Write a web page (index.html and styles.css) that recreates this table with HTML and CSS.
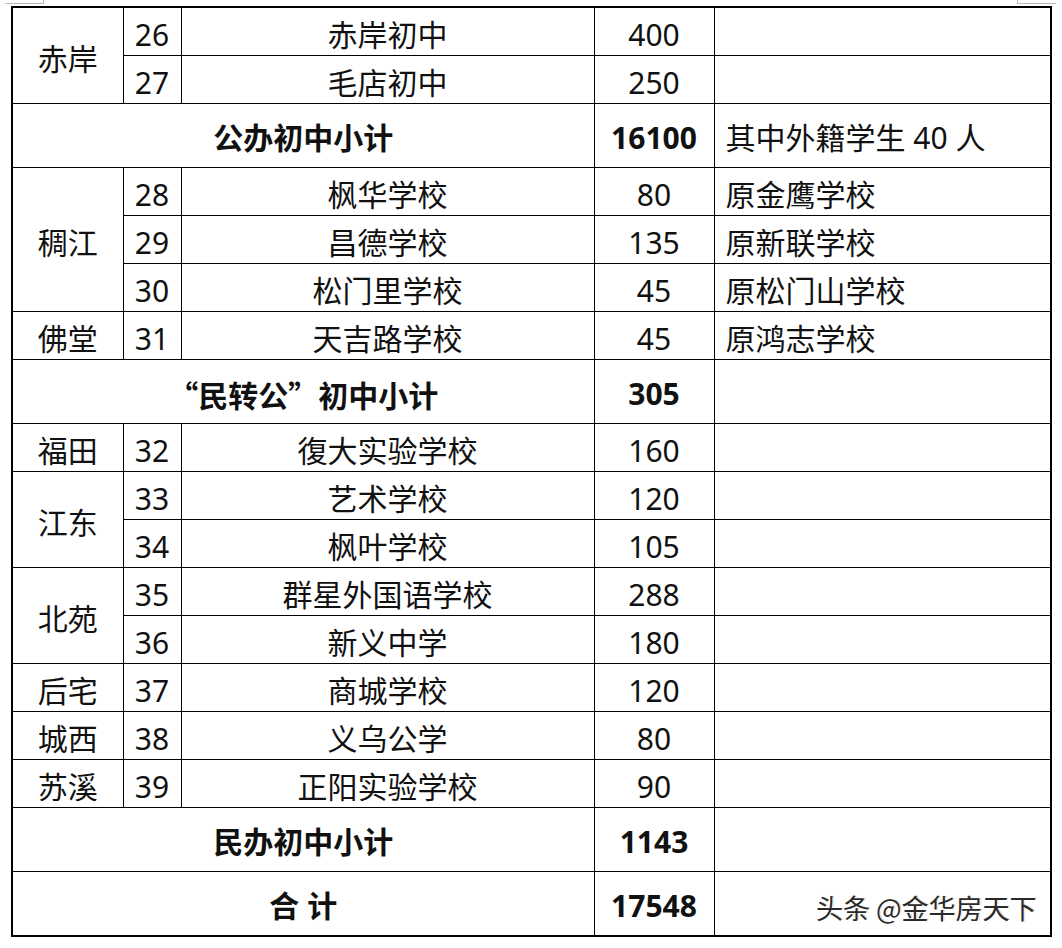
FILE: index.html
```html
<!DOCTYPE html>
<html lang="zh-CN">
<head>
<meta charset="utf-8">
<link rel="stylesheet" href="styles.css">
</head>
<body>
<div class="page">
  <span class="mark mark-left"></span>
  <span class="mark mark-right"></span>
  <table class="sheet">
    <colgroup>
      <col class="c-area"><col class="c-no"><col class="c-name"><col class="c-num"><col class="c-note">
    </colgroup>
    <tbody>
      <tr class="row"><td rowspan="2">赤岸</td><td>26</td><td>赤岸初中</td><td>400</td><td class="note"></td></tr>
      <tr class="row"><td>27</td><td>毛店初中</td><td>250</td><td class="note"></td></tr>
      <tr class="sub"><td colspan="3" class="b">公办初中小计</td><td class="b">16100</td><td class="note">其中外籍学生 40 人</td></tr>
      <tr class="row"><td rowspan="3">稠江</td><td>28</td><td>枫华学校</td><td>80</td><td class="note">原金鹰学校</td></tr>
      <tr class="row"><td>29</td><td>昌德学校</td><td>135</td><td class="note">原新联学校</td></tr>
      <tr class="row"><td>30</td><td>松门里学校</td><td>45</td><td class="note">原松门山学校</td></tr>
      <tr class="row"><td>佛堂</td><td>31</td><td>天吉路学校</td><td>45</td><td class="note">原鸿志学校</td></tr>
      <tr class="sub"><td colspan="3" class="b cjk">“民转公”初中小计</td><td class="b">305</td><td class="note"></td></tr>
      <tr class="row"><td>福田</td><td>32</td><td>復大实验学校</td><td>160</td><td class="note"></td></tr>
      <tr class="row"><td rowspan="2">江东</td><td>33</td><td>艺术学校</td><td>120</td><td class="note"></td></tr>
      <tr class="row"><td>34</td><td>枫叶学校</td><td>105</td><td class="note"></td></tr>
      <tr class="row"><td rowspan="2">北苑</td><td>35</td><td>群星外国语学校</td><td>288</td><td class="note"></td></tr>
      <tr class="row"><td>36</td><td>新义中学</td><td>180</td><td class="note"></td></tr>
      <tr class="row"><td>后宅</td><td>37</td><td>商城学校</td><td>120</td><td class="note"></td></tr>
      <tr class="row"><td>城西</td><td>38</td><td>义乌公学</td><td>80</td><td class="note"></td></tr>
      <tr class="row"><td>苏溪</td><td>39</td><td>正阳实验学校</td><td>90</td><td class="note"></td></tr>
      <tr class="sub"><td colspan="3" class="b">民办初中小计</td><td class="b">1143</td><td class="note"></td></tr>
      <tr class="sub"><td colspan="3" class="b">合 计</td><td class="b">17548</td><td class="note"></td></tr>
    </tbody>
  </table>
  <div class="watermark">头条 @金华房天下</div>
</div>
</body>
</html>
```

FILE: styles.css
```css
html, body {
  margin: 0;
  padding: 0;
  background: #ffffff;
}
.page {
  position: relative;
  width: 1062px;
  height: 948px;
  padding: 6px 0 0 11px;
  box-sizing: border-box;
  font-family: "Noto Sans", "Noto Sans CJK SC", sans-serif;
  color: #111;
}
.sheet {
  border-collapse: collapse;
  table-layout: fixed;
  width: 1039px;
  border: 2px solid #000;
}
.c-area { width: 111px; }
.c-no { width: 58px; }
.c-name { width: 413px; }
.c-num { width: 120px; }
.c-note { width: 337px; }
.sheet td {
  border: 1px solid #000;
  text-align: center;
  vertical-align: middle;
  font-size: 30px;
  line-height: 34px;
  padding: 9px 0 3px 0;
  white-space: nowrap;
  overflow: hidden;
}
.row td { height: 35px; }
.sub td { height: 34px; padding-top: 17px; padding-bottom: 12px; }
.sheet td.note {
  text-align: left;
  padding-left: 11px;
}
.sheet td.b {
  font-weight: 700;
}
.sheet td.cjk {
  font-family: "Noto Sans CJK SC", sans-serif;
}
.mark {
  position: absolute;
  top: 0;
  width: 38px;
  height: 3px;
  border-bottom: 1px solid #b8b8b8;
}
.mark-left {
  left: 5px;
  border-right: 1px solid #b8b8b8;
}
.mark-right {
  left: 1017px;
  border-left: 1px solid #b8b8b8;
}
.watermark {
  position: absolute;
  left: 816px;
  top: 891px;
  font-family: "Noto Sans CJK SC", sans-serif;
  font-size: 27px;
  line-height: 34px;
  color: #2a2a2a;
  text-shadow: 1px 1px 0 #fff, -1px -1px 0 #fff, 1px 0 1px #999;
}
```
